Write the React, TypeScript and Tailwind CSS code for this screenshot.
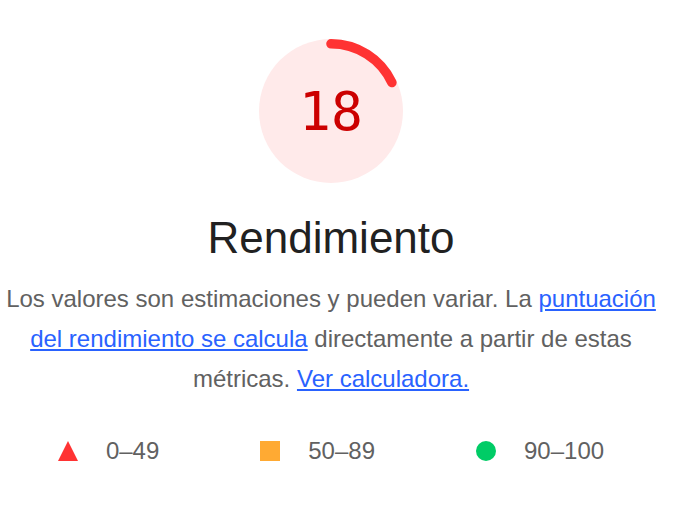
import React from 'react';

const score = 18;

const Gauge: React.FC<{ value: number }> = ({ value }) => {
  const r = 67.2;
  const circumference = 2 * Math.PI * r;
  const filled = (value / 100) * circumference;

  return (
    <div className="relative w-[144px] h-[144px]">
      <svg viewBox="0 0 144 144" className="w-[144px] h-[144px]">
        <circle cx="72" cy="72" r="72" fill="#ffeaea" />
        <circle
          cx="72"
          cy="72"
          r={r}
          fill="none"
          stroke="#ff3333"
          strokeWidth="9.6"
          strokeLinecap="round"
          strokeDasharray={`${filled} ${circumference}`}
          transform="rotate(-90 72 72)"
        />
      </svg>
      <div className="absolute inset-0 flex items-center justify-center text-[53px] leading-none text-[#cc0000] font-['DejaVu_Sans_Mono',monospace]">
        {value}
      </div>
    </div>
  );
};

const legend = [
  { label: '0–49', shape: 'triangle' },
  { label: '50–89', shape: 'square' },
  { label: '90–100', shape: 'circle' },
];

const LegendIcon: React.FC<{ shape: string }> = ({ shape }) => {
  if (shape === 'triangle') {
    return (
      <svg width="20" height="20" viewBox="0 0 20 20">
        <polygon points="10,0 20,20 0,20" fill="#ff3333" />
      </svg>
    );
  }
  if (shape === 'square') {
    return <div className="w-5 h-5 bg-[#ffaa33]" />;
  }
  return <div className="w-5 h-5 rounded-full bg-[#00cc66]" />;
};

export default function App() {
  return (
    <div className="w-[662px] flex flex-col items-center pt-[39px] bg-white font-['Liberation_Sans',Arial,sans-serif]">
      <Gauge value={score} />

      <h1 className="mt-[29px] text-[44px] leading-[52px] text-[#212121] font-normal">
        Rendimiento
      </h1>

      <p className="mt-[15px] text-center text-[24px] leading-[40px] text-[#616161]">
        Los valores son estimaciones y pueden variar. La{' '}
        <a href="#" className="text-[#2962ff] underline">
          puntuación del rendimiento se calcula
        </a>{' '}
        directamente a partir de estas métricas.{' '}
        <a href="#" className="text-[#2962ff] underline">
          Ver calculadora.
        </a>
      </p>

      <div className="mt-[32px] flex items-center gap-[101px] h-[40px]">
        {legend.map((item) => (
          <div key={item.label} className="flex items-center gap-[28px]">
            <LegendIcon shape={item.shape} />
            <span className="text-[24px] leading-[40px] text-[#616161]">{item.label}</span>
          </div>
        ))}
      </div>
    </div>
  );
}
